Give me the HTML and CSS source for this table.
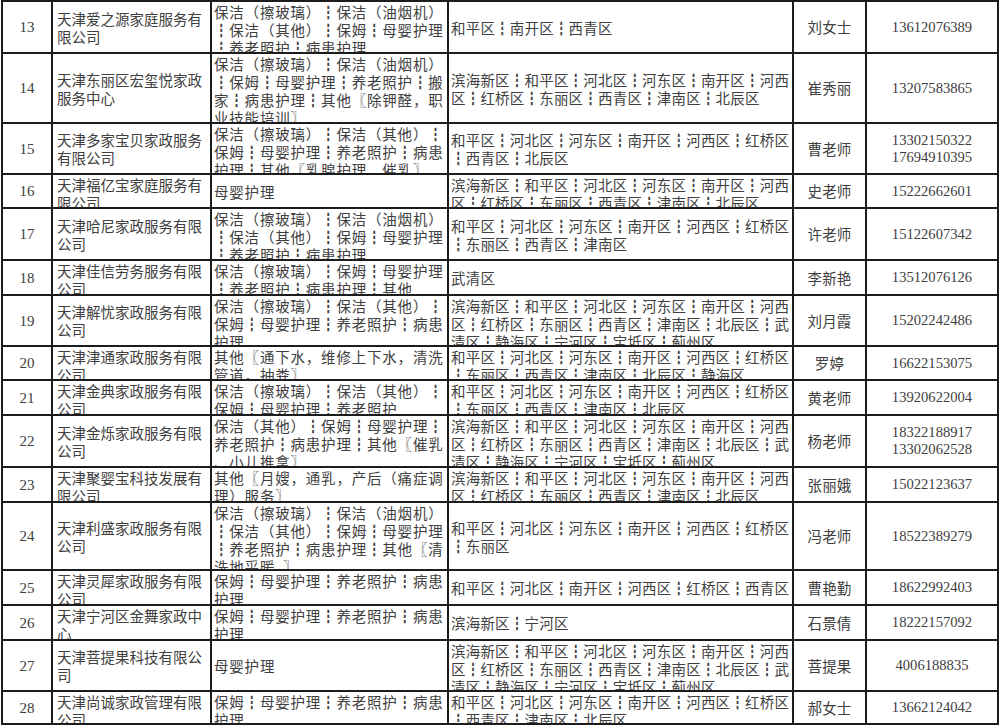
FILE: index.html
```html
<!DOCTYPE html>
<html lang="zh-CN">
<head>
<meta charset="utf-8">
<title>天津家政服务机构名单</title>
<link rel="stylesheet" href="styles.css">
</head>
<body>
<div class="sheet">
  <div class="row"><div class="c no"><span class="t">13</span></div><div class="c name"><span class="t">天津爱之源家庭服务有限公司</span></div><div class="c svc"><span class="t">保洁（擦玻璃）┇保洁（油烟机）┇保洁（其他）┇保姆┇母婴护理┇养老照护┇病患护理</span></div><div class="c area"><span class="t">和平区┇南开区┇西青区</span></div><div class="c who"><span class="t">刘女士</span></div><div class="c tel"><span class="t">13612076389</span></div></div>
  <div class="row"><div class="c no"><span class="t">14</span></div><div class="c name"><span class="t">天津东丽区宏玺悦家政服务中心</span></div><div class="c svc"><span class="t">保洁（擦玻璃）┇保洁（油烟机）┇保姆┇母婴护理┇养老照护┇搬家┇病患护理┇其他〖除钾醛，职业技能培训〗</span></div><div class="c area"><span class="t">滨海新区┇和平区┇河北区┇河东区┇南开区┇河西区┇红桥区┇东丽区┇西青区┇津南区┇北辰区</span></div><div class="c who"><span class="t">崔秀丽</span></div><div class="c tel"><span class="t">13207583865</span></div></div>
  <div class="row"><div class="c no"><span class="t">15</span></div><div class="c name"><span class="t">天津多家宝贝家政服务有限公司</span></div><div class="c svc"><span class="t">保洁（擦玻璃）┇保洁（其他）┇保姆┇母婴护理┇养老照护┇病患护理┇其他〖乳腺护理，催乳〗</span></div><div class="c area"><span class="t">和平区┇河北区┇河东区┇南开区┇河西区┇红桥区┇西青区┇北辰区</span></div><div class="c who"><span class="t">曹老师</span></div><div class="c tel"><span class="t">13302150322<br>17694910395</span></div></div>
  <div class="row"><div class="c no"><span class="t">16</span></div><div class="c name"><span class="t">天津福亿宝家庭服务有限公司</span></div><div class="c svc"><span class="t">母婴护理</span></div><div class="c area"><span class="t">滨海新区┇和平区┇河北区┇河东区┇南开区┇河西区┇红桥区┇东丽区┇西青区┇津南区┇北辰区</span></div><div class="c who"><span class="t">史老师</span></div><div class="c tel"><span class="t">15222662601</span></div></div>
  <div class="row"><div class="c no"><span class="t">17</span></div><div class="c name"><span class="t">天津哈尼家政服务有限公司</span></div><div class="c svc"><span class="t">保洁（擦玻璃）┇保洁（油烟机）┇保洁（其他）┇保姆┇母婴护理┇养老照护┇病患护理</span></div><div class="c area"><span class="t">和平区┇河北区┇河东区┇南开区┇河西区┇红桥区┇东丽区┇西青区┇津南区</span></div><div class="c who"><span class="t">许老师</span></div><div class="c tel"><span class="t">15122607342</span></div></div>
  <div class="row"><div class="c no"><span class="t">18</span></div><div class="c name"><span class="t">天津佳信劳务服务有限公司</span></div><div class="c svc"><span class="t">保洁（擦玻璃）┇保姆┇母婴护理┇养老照护┇病患护理┇其他</span></div><div class="c area"><span class="t">武清区</span></div><div class="c who"><span class="t">李新艳</span></div><div class="c tel"><span class="t">13512076126</span></div></div>
  <div class="row"><div class="c no"><span class="t">19</span></div><div class="c name"><span class="t">天津解忧家政服务有限公司</span></div><div class="c svc"><span class="t">保洁（擦玻璃）┇保洁（其他）┇保姆┇母婴护理┇养老照护┇病患护理</span></div><div class="c area"><span class="t">滨海新区┇和平区┇河北区┇河东区┇南开区┇河西区┇红桥区┇东丽区┇西青区┇津南区┇北辰区┇武清区┇静海区┇宁河区┇宝坻区┇蓟州区</span></div><div class="c who"><span class="t">刘月霞</span></div><div class="c tel"><span class="t">15202242486</span></div></div>
  <div class="row"><div class="c no"><span class="t">20</span></div><div class="c name"><span class="t">天津津通家政服务有限公司</span></div><div class="c svc"><span class="t">其他〖通下水，维修上下水，清洗管道，抽粪〗</span></div><div class="c area"><span class="t">和平区┇河北区┇河东区┇南开区┇河西区┇红桥区┇东丽区┇西青区┇津南区┇北辰区┇静海区</span></div><div class="c who"><span class="t">罗婷</span></div><div class="c tel"><span class="t">16622153075</span></div></div>
  <div class="row"><div class="c no"><span class="t">21</span></div><div class="c name"><span class="t">天津金典家政服务有限公司</span></div><div class="c svc"><span class="t">保洁（擦玻璃）┇保洁（其他）┇保姆┇母婴护理┇养老照护</span></div><div class="c area"><span class="t">和平区┇河北区┇河东区┇南开区┇河西区┇红桥区┇东丽区┇西青区┇津南区┇北辰区</span></div><div class="c who"><span class="t">黄老师</span></div><div class="c tel"><span class="t">13920622004</span></div></div>
  <div class="row"><div class="c no"><span class="t">22</span></div><div class="c name"><span class="t">天津金烁家政服务有限公司</span></div><div class="c svc"><span class="t">保洁（其他）┇保姆┇母婴护理┇养老照护┇病患护理┇其他〖催乳、小儿推拿〗</span></div><div class="c area"><span class="t">滨海新区┇和平区┇河北区┇河东区┇南开区┇河西区┇红桥区┇东丽区┇西青区┇津南区┇北辰区┇武清区┇静海区┇宁河区┇宝坻区┇蓟州区</span></div><div class="c who"><span class="t">杨老师</span></div><div class="c tel"><span class="t">18322188917<br>13302062528</span></div></div>
  <div class="row"><div class="c no"><span class="t">23</span></div><div class="c name"><span class="t">天津聚婴宝科技发展有限公司</span></div><div class="c svc"><span class="t">其他〖月嫂，通乳，产后（痛症调理）服务〗</span></div><div class="c area"><span class="t">滨海新区┇和平区┇河北区┇河东区┇南开区┇河西区┇红桥区┇东丽区┇西青区┇津南区┇北辰区</span></div><div class="c who"><span class="t">张丽娥</span></div><div class="c tel"><span class="t">15022123637</span></div></div>
  <div class="row"><div class="c no"><span class="t">24</span></div><div class="c name"><span class="t">天津利盛家政服务有限公司</span></div><div class="c svc"><span class="t">保洁（擦玻璃）┇保洁（油烟机）┇保洁（其他）┇保姆┇母婴护理┇养老照护┇病患护理┇其他〖清洗地采暖。〗</span></div><div class="c area"><span class="t">和平区┇河北区┇河东区┇南开区┇河西区┇红桥区┇东丽区</span></div><div class="c who"><span class="t">冯老师</span></div><div class="c tel"><span class="t">18522389279</span></div></div>
  <div class="row"><div class="c no"><span class="t">25</span></div><div class="c name"><span class="t">天津灵犀家政服务有限公司</span></div><div class="c svc"><span class="t">保姆┇母婴护理┇养老照护┇病患护理</span></div><div class="c area"><span class="t">和平区┇河北区┇南开区┇河西区┇红桥区┇西青区</span></div><div class="c who"><span class="t">曹艳勤</span></div><div class="c tel"><span class="t">18622992403</span></div></div>
  <div class="row"><div class="c no"><span class="t">26</span></div><div class="c name"><span class="t">天津宁河区金舞家政中心</span></div><div class="c svc"><span class="t">保姆┇母婴护理┇养老照护┇病患护理</span></div><div class="c area"><span class="t">滨海新区┇宁河区</span></div><div class="c who"><span class="t">石景倩</span></div><div class="c tel"><span class="t">18222157092</span></div></div>
  <div class="row"><div class="c no"><span class="t">27</span></div><div class="c name"><span class="t">天津菩提果科技有限公司</span></div><div class="c svc"><span class="t">母婴护理</span></div><div class="c area"><span class="t">滨海新区┇和平区┇河北区┇河东区┇南开区┇河西区┇红桥区┇东丽区┇西青区┇津南区┇北辰区┇武清区┇静海区┇宁河区┇宝坻区┇蓟州区</span></div><div class="c who"><span class="t">菩提果</span></div><div class="c tel"><span class="t">4006188835</span></div></div>
  <div class="row"><div class="c no"><span class="t">28</span></div><div class="c name"><span class="t">天津尚诚家政管理有限公司</span></div><div class="c svc"><span class="t">保姆┇母婴护理┇养老照护┇病患护理</span></div><div class="c area"><span class="t">和平区┇河北区┇河东区┇南开区┇河西区┇红桥区┇西青区┇津南区┇北辰区</span></div><div class="c who"><span class="t">郝女士</span></div><div class="c tel"><span class="t">13662124042</span></div></div>
</div>
</body>
</html>
```

FILE: styles.css
```css
html, body {
  margin: 0;
  padding: 0;
  background: #ffffff;
}

.sheet {
  margin-left: 1px;
  width: max-content;
  display: grid;
  grid-template-columns: 48px 157px 235px 343px 71px 130px;
  grid-template-rows: 50px 68px 49px 32px 50px 33px 49px 32px 33px 50px 33px 66px 33px 33px 49px 31px;
  gap: 2px;
  padding: 2px;
  background: #1c1c1c;
  font-family: "Noto Sans CJK SC", sans-serif;
  font-size: 14.5px;
  line-height: 18px;
  color: #404040;
}

.row {
  display: contents;
}

.c {
  background: #ffffff;
  display: flex;
  flex-direction: column;
  overflow: hidden;
  padding: 1px 3px 0 3px;
  line-break: anywhere;
  word-break: break-all;
}

.t {
  display: block;
  margin: auto 0;
}

.no {
  align-items: center;
  font-family: "Liberation Serif", "Noto Sans CJK SC", serif;
  font-size: 15px;
  padding: 0;
}

.name {
  padding-left: 4px;
  padding-right: 6px;
}

.svc {
  padding-left: 2px;
  padding-right: 2px;
  letter-spacing: 0.8px;
}

.area {
  padding-left: 2px;
  padding-right: 2px;
  letter-spacing: 0.2px;
}

.who {
  align-items: center;
  text-align: center;
  padding: 0;
  letter-spacing: 0.2px;
}

.tel {
  align-items: center;
  text-align: center;
  padding: 0;
  font-family: "Liberation Serif", serif;
  font-size: 14.6px;
  line-height: 17px;
}
```
